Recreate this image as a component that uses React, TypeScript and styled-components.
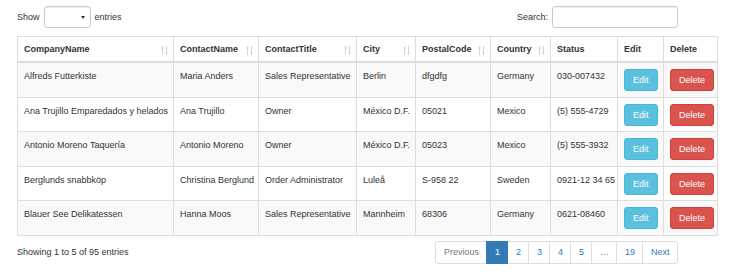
import React from "react";
import styled, { createGlobalStyle } from "styled-components";

const GlobalStyle = createGlobalStyle`
  body {
    margin: 0;
    background: #fff;
    font-family: "Liberation Sans", Arial, sans-serif;
    color: #333;
  }
`;

const Wrapper = styled.div`
  width: 701px;
  padding: 6px 0 0 17px;
  font-size: 9px;
`;

const TopBar = styled.div`
  display: flex;
  justify-content: space-between;
  align-items: center;
  height: 22px;
  margin-bottom: 8px;
  padding-right: 40px;
`;

const Label = styled.label`
  display: flex;
  align-items: center;
  gap: 4px;
`;

const LengthSelect = styled.div`
  position: relative;
  width: 45px;
  height: 20px;
  border: 1px solid #ccc;
  border-radius: 3px;
  box-shadow: inset 0 1px 1px rgba(0, 0, 0, 0.075);

  &::after {
    content: "";
    position: absolute;
    right: 5px;
    top: 9px;
    border-left: 2px solid transparent;
    border-right: 2px solid transparent;
    border-top: 3px solid #333;
  }
`;

const SearchInput = styled.div`
  width: 124px;
  height: 20px;
  border: 1px solid #ccc;
  border-radius: 3px;
  box-shadow: inset 0 1px 1px rgba(0, 0, 0, 0.075);
`;

const Table = styled.table`
  width: 701px;
  table-layout: fixed;
  border-collapse: collapse;
  border: 1px solid #ddd;
`;

const Th = styled.th`
  position: relative;
  text-align: left;
  font-weight: bold;
  height: 24px;
  padding: 0 6px;
  border: 1px solid #ddd;
  border-bottom: 2px solid #ddd;
  white-space: nowrap;
  vertical-align: middle;
`;

const SortIcon = styled.svg`
  position: absolute;
  right: 5px;
  top: 9px;
`;

const Row = styled.tr<{ $striped: boolean }>`
  background: ${(p) => (p.$striped ? "#f9f9f9" : "#fff")};
`;

const Td = styled.td`
  height: 22px;
  padding: 6px 6px 5.5px 6px;
  border: 1px solid #ddd;
  vertical-align: top;
  white-space: nowrap;
  line-height: 14px;
`;

const Button = styled.span<{ $variant: "info" | "danger" }>`
  display: inline-flex;
  align-items: center;
  height: 22px;
  padding: 0 8px;
  border-radius: 3px;
  color: #fff;
  background: ${(p) => (p.$variant === "info" ? "#5bc0de" : "#d9534f")};
  border: 1px solid ${(p) => (p.$variant === "info" ? "#46b8da" : "#d43f3a")};
  box-sizing: border-box;
`;

const Footer = styled.div`
  display: flex;
  justify-content: space-between;
  align-items: center;
  margin-top: 5px;
  padding-right: 40px;
`;

const Pagination = styled.ul`
  display: flex;
  list-style: none;
  margin: 0;
  padding: 0;
`;

const PageItem = styled.li<{ $active?: boolean; $disabled?: boolean }>`
  display: flex;
  align-items: center;
  height: 23px;
  box-sizing: border-box;
  padding: 0 7.5px;
  margin-left: -1px;
  border: 1px solid ${(p) => (p.$active ? "#337ab7" : "#ddd")};
  background: ${(p) => (p.$active ? "#337ab7" : "#fff")};
  color: ${(p) => (p.$active ? "#fff" : p.$disabled ? "#777" : "#337ab7")};
  position: relative;
  z-index: ${(p) => (p.$active ? 2 : 1)};

  &:first-child {
    margin-left: 0;
    border-radius: 3px 0 0 3px;
  }
  &:last-child {
    border-radius: 0 3px 3px 0;
  }
`;

const columns = [
  { name: "CompanyName", width: 156, sort: true },
  { name: "ContactName", width: 85, sort: true },
  { name: "ContactTitle", width: 98, sort: true },
  { name: "City", width: 59, sort: true },
  { name: "PostalCode", width: 75, sort: true },
  { name: "Country", width: 60, sort: true },
  { name: "Status", width: 67, sort: false },
  { name: "Edit", width: 46, sort: false },
  { name: "Delete", width: 54, sort: false },
];

const rows = [
  ["Alfreds Futterkiste", "Maria Anders", "Sales Representative", "Berlin", "dfgdfg", "Germany", "030-007432"],
  ["Ana Trujillo Emparedados y helados", "Ana Trujillo", "Owner", "México D.F.", "05021", "Mexico", "(5) 555-4729"],
  ["Antonio Moreno Taquería", "Antonio Moreno", "Owner", "México D.F.", "05023", "Mexico", "(5) 555-3932"],
  ["Berglunds snabbköp", "Christina Berglund", "Order Administrator", "Luleå", "S-958 22", "Sweden", "0921-12 34 65"],
  ["Blauer See Delikatessen", "Hanna Moos", "Sales Representative", "Mannheim", "68306", "Germany", "0621-08460"],
];

const Sort = () => (
  <SortIcon width="7" height="9" viewBox="0 0 7 9">
    <g stroke="#d4d4d4" strokeWidth="1" fill="#d4d4d4">
      <line x1="1.5" y1="2" x2="1.5" y2="9" />
      <path d="M0 2.5 L1.5 0 L3 2.5 Z" stroke="none" />
      <line x1="5.5" y1="0" x2="5.5" y2="7" />
      <path d="M4 6.5 L5.5 9 L7 6.5 Z" stroke="none" />
    </g>
  </SortIcon>
);

export default function App() {
  return (
    <Wrapper>
      <GlobalStyle />
      <TopBar>
        <Label>
          Show <LengthSelect /> entries
        </Label>
        <Label>
          Search: <SearchInput />
        </Label>
      </TopBar>

      <Table>
        <colgroup>
          {columns.map((c) => (
            <col key={c.name} style={{ width: c.width }} />
          ))}
        </colgroup>
        <thead>
          <tr>
            {columns.map((c) => (
              <Th key={c.name}>
                {c.name}
                {c.sort && <Sort />}
              </Th>
            ))}
          </tr>
        </thead>
        <tbody>
          {rows.map((r, i) => (
            <Row key={i} $striped={i % 2 === 0}>
              {r.map((cell, j) => (
                <Td key={j}>{cell}</Td>
              ))}
              <Td>
                <Button $variant="info">Edit</Button>
              </Td>
              <Td>
                <Button $variant="danger">Delete</Button>
              </Td>
            </Row>
          ))}
        </tbody>
      </Table>

      <Footer>
        <span>Showing 1 to 5 of 95 entries</span>
        <Pagination>
          <PageItem $disabled>Previous</PageItem>
          <PageItem $active>1</PageItem>
          <PageItem>2</PageItem>
          <PageItem>3</PageItem>
          <PageItem>4</PageItem>
          <PageItem>5</PageItem>
          <PageItem $disabled>…</PageItem>
          <PageItem>19</PageItem>
          <PageItem>Next</PageItem>
        </Pagination>
      </Footer>
    </Wrapper>
  );
}
